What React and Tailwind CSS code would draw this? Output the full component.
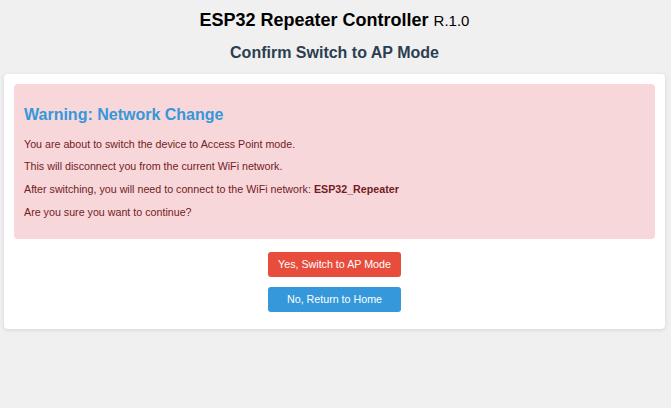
export default function App() {
  return (
    <div className="min-h-[408px] bg-[#f0f0f0] font-['Liberation_Sans',Arial,sans-serif] pl-[4px] pr-[6px] pt-[10px]">
      <h1 className="text-center text-[18px] font-bold text-black leading-[20px]">
        ESP32 Repeater Controller <span className="text-[15px] font-normal">R.1.0</span>
      </h1>
      <h2 className="mt-[12px] text-center text-[16px] font-bold text-[#2c3e50] leading-[20px]">
        Confirm Switch to AP Mode
      </h2>
      <div className="mt-[11px] bg-white rounded-[4px] shadow-[0_1px_4px_rgba(0,0,0,0.12)] p-[10px]">
        <div className="bg-[#f8d7da] rounded-[4px] px-[10px] pt-[21px] pb-[20px] text-[#721c24] text-[10.7px]">
          <h3 className="text-[16px] font-bold text-[#3498db] leading-[20px]">Warning: Network Change</h3>
          <p className="mt-[12.5px] leading-[13px]">You are about to switch the device to Access Point mode.</p>
          <p className="mt-[9.7px] leading-[13px]">This will disconnect you from the current WiFi network.</p>
          <p className="mt-[9.7px] leading-[13px]">
            After switching, you will need to connect to the WiFi network: <strong>ESP32_Repeater</strong>
          </p>
          <p className="mt-[9.7px] leading-[13px]">Are you sure you want to continue?</p>
        </div>
        <div className="flex flex-col items-center gap-[10px] mt-[13px] pb-[7px]">
          <button className="w-[133px] h-[25px] rounded-[3px] bg-[#e74c3c] text-white text-[10.7px]">Yes, Switch to AP Mode</button>
          <button className="w-[133px] h-[25px] rounded-[3px] bg-[#3498db] text-white text-[10.7px]">No, Return to Home</button>
        </div>
      </div>
    </div>
  );
}
